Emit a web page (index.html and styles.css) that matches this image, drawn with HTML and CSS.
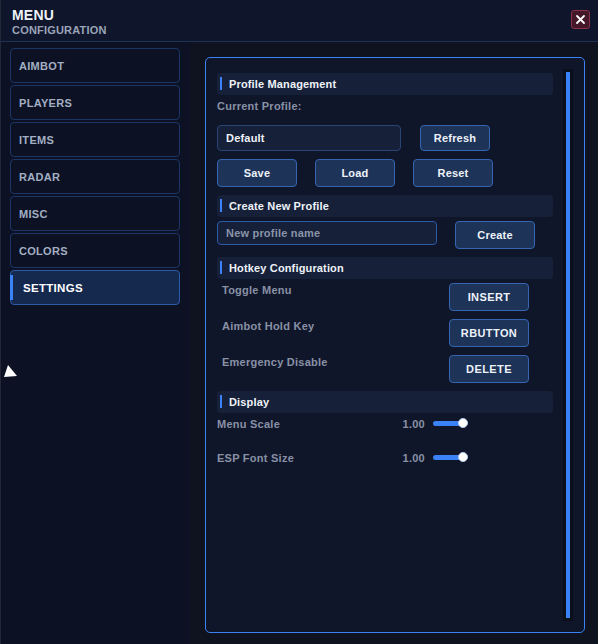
FILE: index.html
```html
<!DOCTYPE html>
<html lang="en">
<head>
    <meta charset="UTF-8">
    <meta name="viewport" content="width=device-width, initial-scale=1.0">
    <title>Menu Configuration</title>
    <link rel="stylesheet" href="styles.css">
</head>
<body>
    <div class="window">
        <div class="header">
            <div class="title">
                <div class="title-main">MENU</div>
                <div class="title-sub">CONFIGURATION</div>
            </div>
            <button class="close-btn" aria-label="Close">
                <svg width="11" height="11" viewBox="0 0 11 11">
                    <path d="M2 2 L9 9 M9 2 L2 9" stroke="#ffffff" stroke-width="1.8" stroke-linecap="round"/>
                </svg>
            </button>
        </div>

        <div class="body">
            <div class="sidebar">
                <div class="nav-item">AIMBOT</div>
                <div class="nav-item">PLAYERS</div>
                <div class="nav-item">ITEMS</div>
                <div class="nav-item">RADAR</div>
                <div class="nav-item">MISC</div>
                <div class="nav-item">COLORS</div>
                <div class="nav-item active">SETTINGS</div>
                <svg class="cursor" width="14" height="14" viewBox="0 0 14 14">
                    <polygon points="4,0 13,11 0,12" fill="#ffffff"/>
                </svg>
            </div>

            <div class="main">
                <div class="panel">
                    <div class="panel-content">
                        <div class="section-title">Profile Management</div>
                        <div class="field-label">Current Profile:</div>
                        <div class="row profile-row">
                            <div class="input profile-input">Default</div>
                            <button class="btn btn-refresh">Refresh</button>
                        </div>
                        <div class="row action-row">
                            <button class="btn">Save</button>
                            <button class="btn">Load</button>
                            <button class="btn">Reset</button>
                        </div>

                        <div class="section-title">Create New Profile</div>
                        <div class="row create-row">
                            <div class="input new-input">New profile name</div>
                            <button class="btn">Create</button>
                        </div>

                        <div class="section-title">Hotkey Configuration</div>
                        <div class="hotkey-row">
                            <span class="hotkey-label">Toggle Menu</span>
                            <button class="btn btn-key">INSERT</button>
                        </div>
                        <div class="hotkey-row">
                            <span class="hotkey-label">Aimbot Hold Key</span>
                            <button class="btn btn-key">RBUTTON</button>
                        </div>
                        <div class="hotkey-row">
                            <span class="hotkey-label">Emergency Disable</span>
                            <button class="btn btn-key">DELETE</button>
                        </div>

                        <div class="section-title">Display</div>
                        <div class="slider-row">
                            <span class="slider-label">Menu Scale</span>
                            <span class="slider-value">1.00</span>
                            <div class="slider"><div class="slider-track"></div><div class="slider-knob"></div></div>
                        </div>
                        <div class="slider-row">
                            <span class="slider-label">ESP Font Size</span>
                            <span class="slider-value">1.00</span>
                            <div class="slider"><div class="slider-track"></div><div class="slider-knob"></div></div>
                        </div>
                    </div>
                    <div class="scrollbar"><div class="scroll-thumb"></div></div>
                </div>
            </div>
        </div>
    </div>
</body>
</html>
```

FILE: styles.css
```css
* {
    box-sizing: border-box;
}
body {
    margin: 0;
    padding: 0;
    background-color: #0c1224;
    font-family: 'Liberation Sans', Arial, sans-serif;
    font-weight: bold;
    font-size: 11px;
    color: #a3afc3;
}
.window {
    width: 598px;
    height: 644px;
    display: flex;
    flex-direction: column;
    border-left: 1px solid #232838;
}
.header {
    height: 42px;
    display: flex;
    justify-content: space-between;
    align-items: flex-start;
    padding: 6px 8px 0 11px;
    background-color: #0f162b;
    border-bottom: 1px solid #1c3256;
}
.title-main {
    font-size: 14px;
    line-height: 18px;
    color: #eef2f8;
    letter-spacing: 0.2px;
}
.title-sub {
    font-size: 11px;
    line-height: 13px;
    color: #9aa4b8;
    letter-spacing: 0.2px;
}
.close-btn {
    margin-top: 4px;
    width: 19px;
    height: 19px;
    padding: 0;
    display: flex;
    align-items: center;
    justify-content: center;
    background-color: #441829;
    border: 1px solid #8c3048;
    border-radius: 3px;
}
.body {
    flex: 1;
    display: flex;
    min-height: 0;
}
.sidebar {
    position: relative;
    width: 189px;
    padding: 6px 10px 0 9px;
    display: flex;
    flex-direction: column;
    gap: 2px;
    background-color: #0c1224;
}
.nav-item {
    height: 35px;
    display: flex;
    align-items: center;
    padding-left: 8px;
    border: 1px solid #1b3566;
    border-radius: 4px;
    color: #a3afc3;
    letter-spacing: 0.3px;
}
.nav-item.active {
    position: relative;
    padding-left: 12px;
    background-color: #15294f;
    border-color: #2d5aa5;
    color: #ffffff;
    font-size: 11.5px;
}
.nav-item.active::before {
    content: '';
    position: absolute;
    left: -1px;
    top: 4px;
    bottom: 4px;
    width: 3px;
    background-color: #3b82f6;
}
.cursor {
    position: absolute;
    left: 3px;
    top: 323px;
}
.main {
    flex: 1;
    padding: 15px 13px 11px 15px;
    background-color: #0f131f;
}
.panel {
    height: 100%;
    display: flex;
    background-color: #10162a;
    border: 1px solid #3b82f6;
    border-radius: 5px;
}
.panel-content {
    flex-shrink: 0;
    width: 347px;
    padding: 15px 0 0 11px;
    display: flex;
    flex-direction: column;
}
.section-title {
    height: 22px;
    display: flex;
    align-items: center;
    position: relative;
    padding-left: 12px;
    margin-bottom: 4px;
    background-color: #162039;
    border-radius: 4px;
    color: #eef2f8;
    letter-spacing: 0.15px;
}
.section-title::before {
    content: '';
    position: absolute;
    left: 3px;
    top: 4px;
    width: 2px;
    height: 13px;
    background-color: #3b82f6;
}
.field-label {
    line-height: 14px;
    color: #8891a5;
    letter-spacing: 0.25px;
    margin-bottom: 12px;
}
.row {
    display: flex;
    align-items: flex-start;
    margin-bottom: 8px;
}
.input {
    height: 26px;
    display: flex;
    align-items: center;
    padding-left: 8px;
    background-color: #162039;
    border: 1px solid #284575;
    border-radius: 4px;
    color: #eef2f8;
    letter-spacing: 0.2px;
}
.profile-input {
    width: 184px;
    margin-right: 19px;
}
.new-input {
    width: 220px;
    height: 24px;
    margin-right: 18px;
    border-color: #2d5aa8;
    color: #8a94a8;
}
.btn {
    width: 80px;
    height: 28px;
    padding: 0;
    background-color: #1d3358;
    border: 1px solid #3565b3;
    border-radius: 4px;
    font-family: inherit;
    font-weight: bold;
    font-size: 11px;
    color: #eef2f8;
    letter-spacing: 0.2px;
}
.btn-refresh {
    width: 70px;
    height: 26px;
}
.action-row {
    gap: 18px;
}
.hotkey-row {
    display: flex;
    align-items: flex-start;
    margin-bottom: 8px;
}
.hotkey-label {
    width: 232px;
    padding-left: 5px;
    line-height: 14px;
    color: #8891a5;
    letter-spacing: 0.25px;
}
.btn-key {
    letter-spacing: 0.4px;
}
.slider-row {
    display: flex;
    align-items: center;
    height: 14px;
    margin-bottom: 20px;
    letter-spacing: 0.25px;
}
.slider-label {
    width: 178px;
    color: #8891a5;
}
.slider-value {
    width: 30px;
    text-align: right;
    color: #8891a5;
}
.slider {
    position: relative;
    width: 35px;
    height: 10px;
    margin-left: 8px;
}
.slider-track {
    position: absolute;
    left: 0;
    top: 2px;
    width: 31px;
    height: 5px;
    border-radius: 3px;
    background-color: #3b82f6;
}
.slider-knob {
    position: absolute;
    right: 0;
    top: -1px;
    width: 10px;
    height: 10px;
    border-radius: 50%;
    background-color: #ffffff;
    border: 1px solid #b8cdf0;
}
.scrollbar {
    width: 10px;
    margin: 11px 0 11px 10px;
    padding: 3px;
    background-color: #0a0f1c;
}
.scroll-thumb {
    height: 100%;
    background-color: #3b82f6;
}
```
